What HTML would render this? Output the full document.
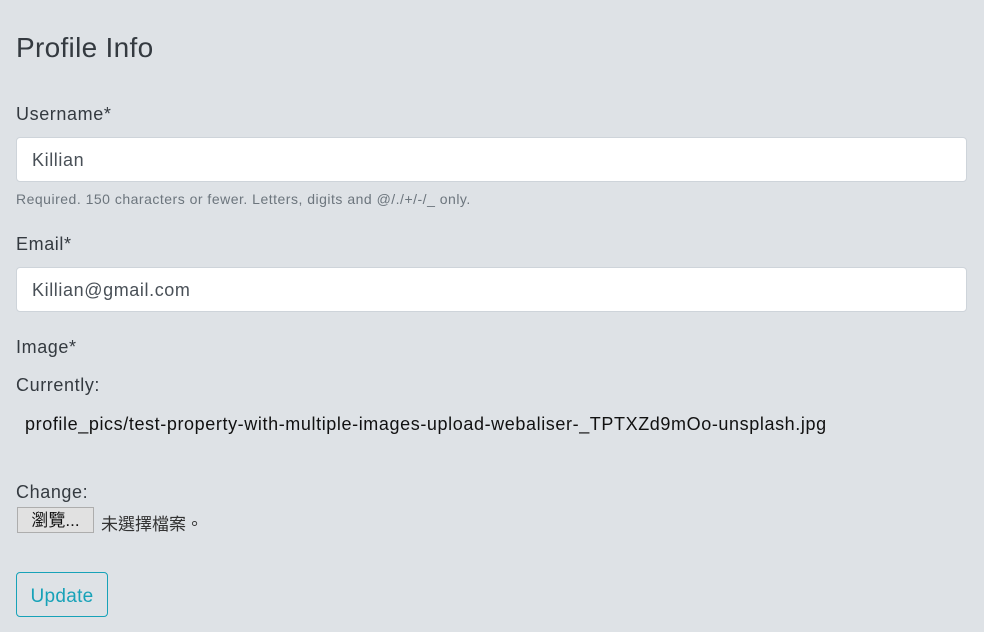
<!DOCTYPE html>
<html><head><meta charset="utf-8"><style>
body{margin:0;width:984px;height:632px;background:#dee2e6;font-family:"Liberation Sans","Noto Sans CJK TC",sans-serif;color:#343a40;position:relative;overflow:hidden}
.a{position:absolute;white-space:nowrap;font-size:18px;letter-spacing:.6px}
.inp{position:absolute;left:16px;width:951px;height:45px;background:#fff;border:1px solid #ced4da;border-radius:4px;box-sizing:border-box;font-size:18px;letter-spacing:.6px;line-height:44px;padding-left:15px;color:#495057}
</style></head><body>
<div class="a" style="left:16px;top:32px;font-size:28px;letter-spacing:.3px;color:#343a40">Profile Info</div>
<div class="a" style="left:16px;top:104px">Username*</div>
<div class="inp" style="top:137px">Killian</div>
<div class="a" style="left:16px;top:191px;font-size:14px;letter-spacing:.5px;color:#6c757d">Required. 150 characters or fewer. Letters, digits and @/./+/-/_ only.</div>
<div class="a" style="left:16px;top:234px">Email*</div>
<div class="inp" style="top:267px">Killian@gmail.com</div>
<div class="a" style="left:16px;top:337px">Image*</div>
<div class="a" style="left:16px;top:375px">Currently:</div>
<div class="a" style="left:25px;top:414px;color:#111">profile_pics/test-property-with-multiple-images-upload-webaliser-_TPTXZd9mOo-unsplash.jpg</div>
<div class="a" style="left:16px;top:482px">Change:</div>
<div class="a" style="left:17px;top:507px;width:77px;height:26px;box-sizing:border-box;background:#e1e1e1;border:1px solid #adadad;font-size:17px;letter-spacing:0;line-height:26px;text-align:center;color:#111">瀏覽...</div>
<div class="a" style="left:101px;top:510px;font-size:17px;letter-spacing:0;color:#333">未選擇檔案。</div>
<div class="a" style="left:16px;top:572px;width:92px;height:45px;box-sizing:border-box;border:1px solid #17a2b8;border-radius:4px;color:#17a2b8;font-size:19px;letter-spacing:.3px;line-height:47px;text-align:center">Update</div>
</body></html>
